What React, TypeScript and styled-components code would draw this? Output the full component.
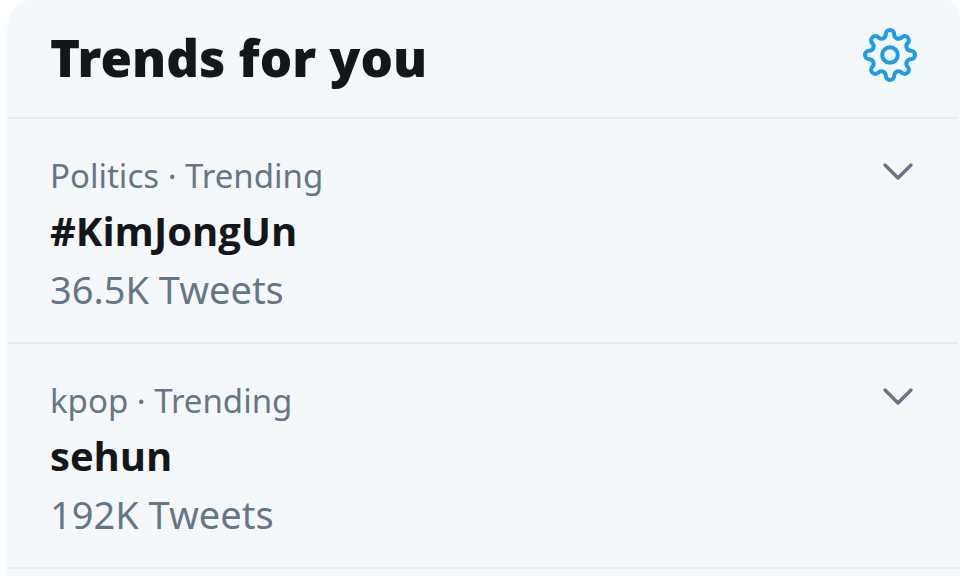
import React from "react";
import styled, { createGlobalStyle } from "styled-components";

const GlobalStyle = createGlobalStyle`
  * { box-sizing: border-box; }
  body {
    margin: 0;
    background: #ffffff;
    font-family: "Noto Sans", "Open Sans", sans-serif;
    overflow: hidden;
  }
`;

const Panel = styled.section`
  margin: 0 0 0 7px;
  padding: 0 2px 8px 1px;
  background: #f5f8fb;
  border-radius: 20px 12px 0 0 / 32px 16px 0 0;
  overflow: hidden;
`;

const Header = styled.header`
  display: flex;
  align-items: center;
  justify-content: space-between;
  height: 119px;
  padding: 0 41px 8px 42px;
  border-bottom: 2px solid #e6ecf0;
`;

const Title = styled.h2`
  margin: 0;
  padding-top: 4px;
  font-size: 51px;
  line-height: 64px;
  font-weight: 900;
  color: #14171a;
`;

const IconButton = styled.button`
  display: flex;
  padding: 0;
  border: 0;
  background: none;
  color: ${(p) => p.color};
  cursor: pointer;
`;

const List = styled.ul`
  margin: 0;
  padding: 0;
  list-style: none;
`;

const Trend = styled.li`
  display: flex;
  align-items: flex-start;
  justify-content: space-between;
  height: 225px;
  padding: 29px 44px 0 42px;
  border-bottom: 2px solid #e6ecf0;

  & > button { margin-top: 14px; }
`;

const Category = styled.div`
  font-size: 33px;
  line-height: 55px;
  color: #657786;
`;

const Name = styled.a`
  display: block;
  font-family: "Open Sans", "Noto Sans", sans-serif;
  font-size: 40px;
  line-height: 56px;
  font-weight: 700;
  color: #14171a;
  text-decoration: none;
`;

const Count = styled.div`
  font-size: 38px;
  line-height: 60px;
  color: #657786;
`;

const trends = [
  { category: "Politics", name: "#KimJongUn", count: "36.5K Tweets" },
  { category: "kpop", name: "sehun", count: "192K Tweets" },
];

const LOBES = 8;
const LOBE_RADIUS = 4.2;
const LOBE_DISTANCE = 20.8;

function gearPath() {
  const point = (x: number, y: number, turn: number) => {
    const a = (turn / LOBES) * Math.PI * 2;
    const px = 27 + x * Math.cos(a) - y * Math.sin(a);
    const py = 27 + x * Math.sin(a) + y * Math.cos(a);
    return `${px.toFixed(2)} ${py.toFixed(2)}`;
  };
  const arc = `A${LOBE_RADIUS} ${LOBE_RADIUS} 0 0`;
  let d = `M${point(-LOBE_RADIUS, -LOBE_DISTANCE, 0)}`;
  for (let i = 0; i < LOBES; i++) {
    d += `${arc} 1 ${point(LOBE_RADIUS, -LOBE_DISTANCE, i)}`;
    d += `A4.4 4.4 0 0 0 ${point(-LOBE_RADIUS, -LOBE_DISTANCE, i + 1)}`;
  }
  return `${d}Z`;
}

const Gear = () => (
  <svg width="54" height="54" viewBox="0 0 54 54" fill="none" stroke="currentColor" strokeWidth="4" strokeLinejoin="round" aria-hidden="true">
    <path d={gearPath()} />
    <circle cx="27" cy="27" r="7.8" />
  </svg>
);

const Chevron = () => (
  <svg width="32" height="20" viewBox="0 0 32 20" fill="none" stroke="currentColor" strokeWidth="3.4" strokeLinecap="round" strokeLinejoin="round" aria-hidden="true">
    <path d="M3 3 16 16 29 3" />
  </svg>
);

export default function App() {
  return (
    <>
      <GlobalStyle />
      <Panel>
        <Header>
          <Title>Trends for you</Title>
          <IconButton color="#1d9bf0" aria-label="Settings"><Gear /></IconButton>
        </Header>
        <List>
          {trends.map((t) => (
            <Trend key={t.name}>
              <div>
                <Category>{t.category} · Trending</Category>
                <Name href="#">{t.name}</Name>
                <Count>{t.count}</Count>
              </div>
              <IconButton color="#657786" aria-label={`More about ${t.name}`}><Chevron /></IconButton>
            </Trend>
          ))}
        </List>
      </Panel>
    </>
  );
}
